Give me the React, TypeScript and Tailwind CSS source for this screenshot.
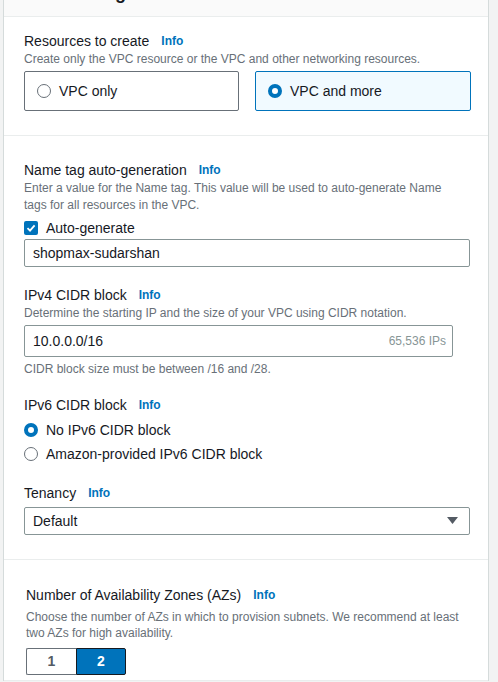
import React from 'react'

const font = { fontFamily: '"Liberation Sans", Arial, sans-serif' }

function Info() {
  return <span className="ml-[12px] text-[12px] leading-[20px] font-bold text-[#0073bb]">Info</span>
}

function Label({ children }: { children: React.ReactNode }) {
  return (
    <div className="flex items-center h-[20px] text-[14px] leading-[20px] text-[#16191f]">
      <span>{children}</span>
      <Info />
    </div>
  )
}

function Desc({ children, className = '' }: { children: React.ReactNode; className?: string }) {
  return <p className={`text-[12px] leading-[16px] text-[#687078] ${className}`}>{children}</p>
}

function Radio({ checked }: { checked?: boolean }) {
  return checked ? (
    <span className="block w-[14px] h-[14px] shrink-0 rounded-full border-[4px] border-[#0073bb] bg-white" />
  ) : (
    <span className="block w-[14px] h-[14px] shrink-0 rounded-full border-[1.5px] border-[#687078] bg-white" />
  )
}

export default function App() {
  return (
    <div className="w-[498px] h-[682px] overflow-hidden bg-[#f2f3f3]" style={font}>
      <div className="ml-[3px] w-[486px] border-x border-[#d5dbdb] bg-white">
        {/* header, scrolled mostly out of view */}
        <div className="h-[17px] overflow-hidden bg-[#fafafa] border-b border-[#eaeded] pl-[21px]">
          <div className="-mt-[17px] text-[18px] leading-[20px] font-bold text-[#16191f]">VPC settings</div>
        </div>

        {/* resources to create */}
        <div className="pt-[14px] pb-[24px] pl-[20px] border-b border-[#eaeded]">
          <Label>Resources to create</Label>
          <Desc>Create only the VPC resource or the VPC and other networking resources.</Desc>
          <div className="mt-[4px] flex gap-[16px]">
            <div className="w-[215px] h-[40px] border border-[#687078] rounded-[2px] flex items-center gap-[8px] pl-[12px] text-[14px] text-[#16191f]">
              <Radio />
              <span>VPC only</span>
            </div>
            <div className="w-[216px] h-[40px] border border-[#0073bb] bg-[#f1faff] rounded-[2px] flex items-center gap-[8px] pl-[12px] text-[14px] text-[#16191f]">
              <Radio checked />
              <span>VPC and more</span>
            </div>
          </div>
        </div>

        {/* name tag + cidr + tenancy */}
        <div className="pt-[24px] pb-[24px] pl-[20px] pr-[17px] border-b border-[#eaeded]">
          <Label>Name tag auto-generation</Label>
          <Desc className="leading-[17px] pr-[10px]">
            Enter a value for the Name tag. This value will be used to auto-generate Name tags for all resources in the VPC.
          </Desc>
          <div className="mt-[4px] flex items-center gap-[8px] h-[20px] text-[14px] text-[#16191f]">
            <span className="w-[14px] h-[14px] rounded-[2px] bg-[#0073bb] flex items-center justify-center">
              <svg width="10" height="10" viewBox="0 0 10 10">
                <path d="M1.5 5.2 L4 7.6 L8.6 2.3" fill="none" stroke="white" strokeWidth="1.8" />
              </svg>
            </span>
            <span>Auto-generate</span>
          </div>
          <div className="mt-[1px] w-[446px] h-[28px] border border-[#879596] rounded-[2px] flex items-center pl-[8px] text-[14px] text-[#16191f]">
            shopmax-sudarshan
          </div>

          <div className="mt-[18px]">
            <Label>IPv4 CIDR block</Label>
          </div>
          <Desc>Determine the starting IP and the size of your VPC using CIDR notation.</Desc>
          <div className="mt-[4px] w-[429px] h-[32px] border border-[#879596] rounded-[2px] flex items-center justify-between pl-[8px] pr-[6px]">
            <span className="text-[14px] text-[#16191f]">10.0.0.0/16</span>
            <span className="text-[12px] text-[#879596]">65,536 IPs</span>
          </div>
          <Desc className="mt-[4px]">CIDR block size must be between /16 and /28.</Desc>

          <div className="mt-[18px]">
            <Label>IPv6 CIDR block</Label>
          </div>
          <div className="mt-[5px] flex flex-col gap-[4px] text-[14px] text-[#16191f]">
            <div className="flex items-center gap-[8px] h-[20px]">
              <Radio checked />
              <span>No IPv6 CIDR block</span>
            </div>
            <div className="flex items-center gap-[8px] h-[20px]">
              <Radio />
              <span>Amazon-provided IPv6 CIDR block</span>
            </div>
          </div>

          <div className="mt-[19px]">
            <Label>Tenancy</Label>
          </div>
          <div className="mt-[4px] w-[446px] h-[28px] border border-[#879596] rounded-[2px] flex items-center justify-between pl-[8px] pr-[11px] text-[14px] text-[#16191f]">
            <span>Default</span>
            <svg width="11" height="8" viewBox="0 0 11 8">
              <path d="M0 0 H11 L5.5 7 Z" fill="#545b64" />
            </svg>
          </div>
        </div>

        {/* availability zones */}
        <div className="pt-[25px] pl-[22px] pr-[14px] h-[121px] border-b border-[#eaeded]">
          <Label>Number of Availability Zones (AZs)</Label>
          <Desc className="mt-[4px]">
            Choose the number of AZs in which to provision subnets. We recommend at least two AZs for high availability.
          </Desc>
          <div className="mt-[7px] flex w-[100px] h-[27px] text-[14px] font-bold">
            <div className="w-[50px] border border-[#687078] border-r-0 rounded-l-[2px] flex items-center justify-center text-[#545b64]">1</div>
            <div className="w-[50px] border border-[#16191f] bg-[#0073bb] rounded-r-[2px] flex items-center justify-center text-white">2</div>
          </div>
        </div>
      </div>
    </div>
  )
}
